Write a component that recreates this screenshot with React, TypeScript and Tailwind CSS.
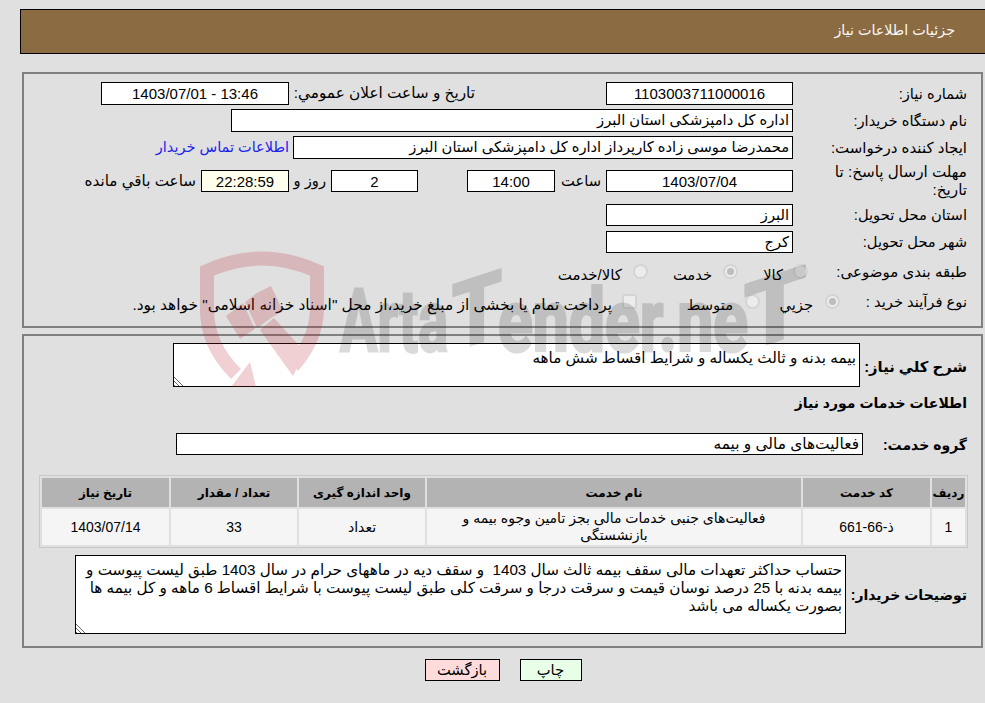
import type { ReactNode } from 'react';

function Box({ className, children }: { className: string; children?: ReactNode }) {
  return (
    <div className={`flex items-center border border-black bg-white px-[3px] leading-none ${className}`}>
      {children}
    </div>
  );
}

function Label({ className = '', children }: { className?: string; children: ReactNode }) {
  return <div className={`w-[188px] shrink-0 pr-[14px] leading-[18px] ${className}`}>{children}</div>;
}

function Radio({ checked }: { checked?: boolean }) {
  return (
    <span className="flex h-[15px] w-[15px] shrink-0 items-center justify-center rounded-full border-2 border-[#d4d4d4] bg-[#ececec]">
      {checked ? <span className="h-[7px] w-[7px] rounded-full bg-[#bdbdbd]" /> : null}
    </span>
  );
}

function Watermark() {
  return (
    <svg
      className="pointer-events-none absolute left-[195px] top-[245px] [direction:ltr]"
      width="620"
      height="142"
      viewBox="195 245 620 142"
    >
      <g opacity="0.2" fill="#b81822">
        <path
          d="M236 374 Q207 345 207 310 L207 271 Q262 246 317 271 L317 310 Q316 340 293 366"
          fill="none"
          stroke="#b81822"
          strokeWidth="14"
        />
        <polygon points="260,330 274,318 305,352 293,376" />
        <polygon points="226,316 243,303 255,329 240,339" />
        <polygon points="245,302 257,293 271,318 257,328" />
        <polygon points="257,293 271,286 283,311 271,318" />
        <polygon points="250,362 231,387 256,387" />
      </g>
      <g opacity="0.14" fill="#000" stroke="#000" strokeWidth="3" fontFamily="Roboto, sans-serif" fontWeight="700">
        <text x="340" y="351" fontSize="88" textLength="108" lengthAdjust="spacingAndGlyphs">
          Arta
        </text>
        <text transform="translate(452 351) skewY(-18)" fontSize="92" textLength="50" lengthAdjust="spacingAndGlyphs">
          T
        </text>
        <text x="498" y="351" fontSize="88" textLength="250" lengthAdjust="spacingAndGlyphs">
          ender.ne
        </text>
        <text transform="translate(744 351) skewY(-18)" fontSize="92" textLength="62" lengthAdjust="spacingAndGlyphs">
          T
        </text>
      </g>
    </svg>
  );
}

const TABLE_HEAD = ['رديف', 'کد خدمت', 'نام خدمت', 'واحد اندازه گيری', 'تعداد / مقدار', 'تاريخ نياز'];
const COLUMN_WIDTHS = ['w-[33px]', 'w-[127px]', 'w-[374px]', 'w-[126px]', 'w-[126px]', 'w-[127px]'];

// the grip of a read-only textarea is darker in the original than chromium's default
const GRIP =
  '[&::-webkit-resizer]:[background:linear-gradient(45deg,transparent_36%,#fff_36%),repeating-linear-gradient(45deg,#666_0,#666_1px,#fff_1px,#fff_3px)]';

export default function App() {
  return (
    <div
      dir="rtl"
      className="relative h-[703px] w-full overflow-hidden bg-[#e0e0e0] pt-[9px] text-[14.7px] text-black [font-family:'Liberation_Sans','DejaVu_Sans',sans-serif]"
    >
      <div className="ml-[20px] flex h-[45px] items-center border border-r-0 border-black bg-[#8b6b42] pb-[2px] pr-[30px] text-[14.3px] text-[#f8f8f8]">
        جزئیات اطلاعات نیاز
      </div>

      <div className="ml-[22px] mr-[2px] mt-[18px] h-[256px] border-2 border-[#808080] pt-[8px]">
        <div className="flex h-[23px] items-center">
          <Label>شماره نياز:</Label>
          <Box className="h-[23px] w-[187px] justify-center text-[15px]">1103003711000016</Box>
          <div className="w-[131px]" />
          <div className="w-[186px] text-[15.3px]">تاريخ و ساعت اعلان عمومي:</div>
          <Box className="h-[23px] w-[188px] justify-center text-[15px]">
            <span dir="ltr">1403/07/01 - 13:46</span>
          </Box>
        </div>
        <div className="mt-[4px] flex h-[23px] items-center">
          <Label>نام دستگاه خريدار:</Label>
          <Box className="h-[23px] w-[562px]">اداره کل دامپزشکی استان البرز</Box>
        </div>
        <div className="mt-[4px] flex h-[23px] items-center">
          <Label className="text-[15px]">ايجاد کننده درخواست:</Label>
          <Box className="h-[23px] w-[500px]">محمدرضا موسی زاده کارپرداز اداره کل دامپزشکی استان البرز</Box>
          <a className="mr-[4px] text-[14.5px] text-[#2222ee]" href="#">
            اطلاعات تماس خريدار
          </a>
        </div>
        <div className="mt-[11px] flex h-[22px] items-center">
          <Label className="text-[15.2px]">
            مهلت ارسال پاسخ: تا
            <br />
            تاريخ:
          </Label>
          <Box className="h-[22px] w-[187px] justify-center text-[15px]">1403/07/04</Box>
          <div className="w-[51px] pr-[5px]">ساعت</div>
          <Box className="h-[22px] w-[88px] justify-center text-[15px]">14:00</Box>
          <div className="w-[49px]" />
          <Box className="h-[22px] w-[87px] justify-center text-[15px]">2</Box>
          <div className="w-[42px] pr-[5px]">روز و</div>
          <Box className="h-[22px] w-[88px] justify-center !bg-[#ffffee] text-[15px]">22:28:59</Box>
          <div className="mr-[5px] text-[15.2px]">ساعت باقي مانده</div>
        </div>
        <div className="mt-[12px] flex h-[22px] items-center">
          <Label>استان محل تحويل:</Label>
          <Box className="h-[22px] w-[187px]">البرز</Box>
        </div>
        <div className="mt-[5px] flex h-[22px] items-center">
          <Label>شهر محل تحويل:</Label>
          <Box className="h-[22px] w-[187px]">کرج</Box>
        </div>
        <div className="mt-[8px] flex h-[22px] items-center">
          <Label className="text-[15px]">طبقه بندی موضوعی:</Label>
          <div className="flex items-center">
            <span className="-mt-[2px] ml-[10px] mr-[-15px]">
              <Radio />
            </span>
            <span className="mt-[6px] w-[45px]">کالا</span>
            <span className="-mt-[2px]">
              <Radio checked />
            </span>
            <span className="mr-[11px] mt-[6px] w-[64px]">خدمت</span>
            <span className="-mt-[2px]">
              <Radio />
            </span>
            <span className="mr-[11px] mt-[6px] text-[15px]">کالا/خدمت</span>
          </div>
        </div>
        <div className="mt-[8px] flex h-[22px] items-center">
          <Label>نوع فرآيند خريد :</Label>
          <div className="flex items-center">
            <span className="-mt-[2px] mr-[-47px]">
              <Radio checked />
            </span>
            <span className="mr-[12px] mt-[6px] w-[53px]">جزيي</span>
            <span className="-mt-[2px]">
              <Radio />
            </span>
            <span className="mr-[12px] mt-[6px] w-[96px]">متوسط</span>
            <span className="-mt-[2px] h-[15px] w-[15px] rounded-[3px] border-2 border-[#d4d4d4] bg-[#ececec]" />
            <span className="mr-[10px] mt-[6px] whitespace-nowrap text-[15.4px]">
              پرداخت تمام يا بخشی از مبلغ خريد،از محل "اسناد خزانه اسلامی" خواهد بود.
            </span>
          </div>
        </div>
      </div>

      <div className="ml-[22px] mr-[2px] mt-[6px] h-[314px] border-2 border-[#808080]">
        <div className="mt-[7px] flex h-[43px] items-center">
          <div className="mt-[5px] w-[121px] shrink-0 pr-[14px] text-[14.8px] font-bold">شرح کلي نياز:</div>
          <textarea
            readOnly
            className={`h-[44px] w-[687px] resize border border-black bg-white px-[3px] pt-[6px] text-[15.2px] leading-[16px] outline-none ${GRIP}`}
            defaultValue="بیمه بدنه و ثالث یکساله و شرایط اقساط شش ماهه"
          />
        </div>
        <div className="mt-[8px] h-[18px] pr-[14px] text-[14px] font-bold leading-[18px]">اطلاعات خدمات مورد نياز</div>
        <div className="mt-[21px] flex h-[22px] items-center">
          <div className="mt-[2px] w-[118px] shrink-0 pr-[14px] text-[14px] font-bold">گروه خدمت:</div>
          <Box className="h-[22px] w-[687px] text-[15.4px]">فعالیت‌های مالی و بیمه</Box>
        </div>
        <div className="mt-[20px] px-[13px]">
          <table className="w-[929px] border-separate border-spacing-[2px] border border-[#c8c8c8] text-center text-[14px]">
            <thead>
              <tr>
                {TABLE_HEAD.map((head, i) => (
                  <th key={head} className={`h-[29px] bg-[#b3b3b3] p-0 text-[12px] font-bold ${COLUMN_WIDTHS[i]}`}>
                    {head}
                  </th>
                ))}
              </tr>
            </thead>
            <tbody>
              <tr className="leading-[17px]">
                <td className="h-[36px] bg-[#f5f5f5] p-0">1</td>
                <td className="bg-[#f5f5f5] p-0">ذ-66-661</td>
                <td className="bg-[#f5f5f5] px-[8px]">
                  فعالیت‌های جنبی خدمات مالی بجز تامین وجوه بیمه و
                  <br />
                  بازنشستگی
                </td>
                <td className="bg-[#f5f5f5] p-0">تعداد</td>
                <td className="bg-[#f5f5f5] p-0">33</td>
                <td className="bg-[#f5f5f5] p-0">1403/07/14</td>
              </tr>
            </tbody>
          </table>
        </div>
        <div className="mt-[7px] flex items-center">
          <div className="mt-[2px] w-[135px] shrink-0 pr-[14px] text-[14px] font-bold">توضيحات خريدار:</div>
          <textarea
            readOnly
            className={`h-[79px] w-[771px] resize border border-black bg-white px-[3px] pt-[5px] text-[15.2px] leading-[18px] outline-none ${GRIP}`}
            defaultValue={
              'حتساب حداکثر تعهدات مالی سقف بیمه ثالث سال 1403  و سقف دیه در ماههای حرام در سال 1403 طبق لیست پیوست و\nبیمه بدنه با 25 درصد نوسان قیمت و سرقت درجا و سرقت کلی طبق لیست پیوست با شرایط اقساط 6 ماهه و کل بیمه ها\nبصورت یکساله می باشد'
            }
          />
        </div>
      </div>

      <div className="mt-[11px] flex justify-center gap-[20px] pl-[21px]">
        <button type="button" className="h-[22px] w-[62px] border border-black bg-[#e8ffe8] leading-none">
          چاپ
        </button>
        <button type="button" className="h-[22px] w-[75px] border border-black bg-[#ffdcdc] leading-none">
          بازگشت
        </button>
      </div>

      <Watermark />
    </div>
  );
}
